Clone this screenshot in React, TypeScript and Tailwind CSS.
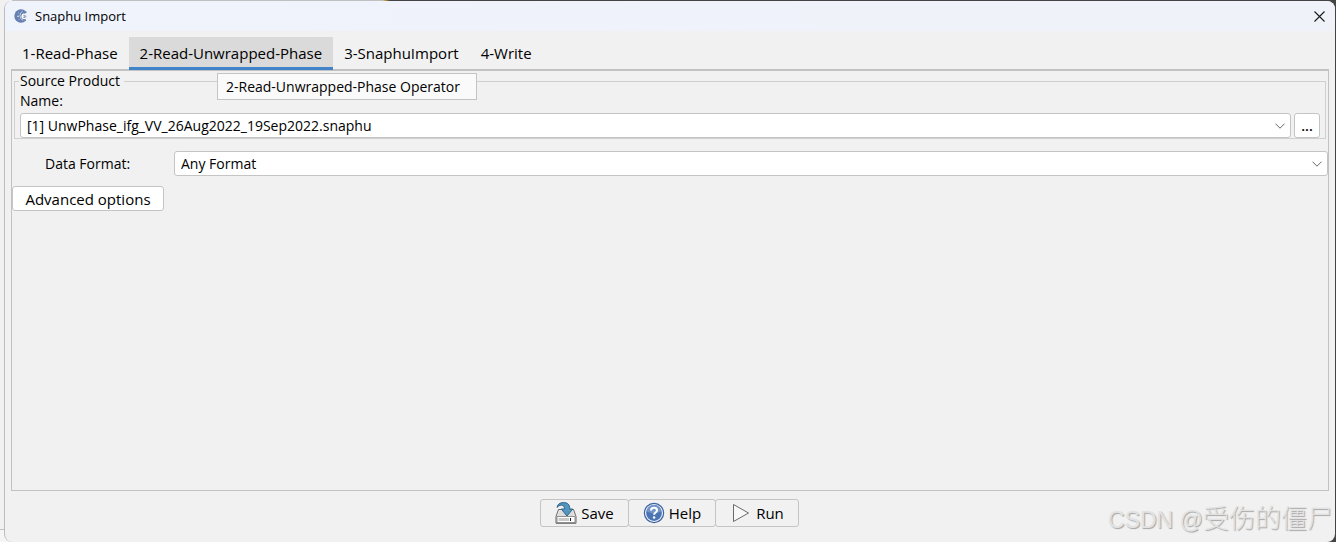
import type { ReactNode } from "react";

const tabs = ["1-Read-Phase", "2-Read-Unwrapped-Phase", "3-SnaphuImport", "4-Write"];
const activeTab = "2-Read-Unwrapped-Phase";

function AppLogo() {
  return (
    <svg width="14" height="14" viewBox="0 0 14 14" aria-hidden="true">
      <circle cx="7" cy="7" r="6.7" fill="#6580b0" />
      <path d="M11.2 4.5L14 3v9l-2.5-1.5z" fill="#eff2fb" />
      <path d="M8.6 2.2a4.8 4.8 0 0 0-2.6 4.6 4.7 4.7 0 0 0 3.2 4.5" fill="none" stroke="#cfd9ec" strokeWidth="0.9" />
      <path
        d="M8.2 7.1h4.2a2.2 2.2 0 1 0-.8 1.9"
        fill="none"
        stroke="#fff"
        strokeWidth="1.3"
      />
      <path d="M10 7.1h2.5" stroke="#6580b0" strokeWidth="0.9" />
      <circle cx="4" cy="7.4" r="0.8" fill="#dce4f2" />
      <circle cx="4.6" cy="4" r="0.5" fill="#b9c7e0" />
      <circle cx="5" cy="10.6" r="0.5" fill="#b9c7e0" />
    </svg>
  );
}

function SaveIcon() {
  return (
    <svg width="22" height="22" viewBox="0 0 22 22" aria-hidden="true">
      <path d="M3.5 7.5h15l2.5 7v6.8H1v-6.8z" fill="#f0f0ee" stroke="#666" />
      <path d="M4.5 8.5h13l2 5.5H2.5z" fill="#dcdcda" />
      <path d="M2 14.5h18v6H2z" fill="#fff" stroke="#777" strokeWidth="0.8" />
      <path d="M3.5 16h10.5v3H3.5z" fill="#c9c9c7" />
      <path d="M15.5 16v3" stroke="#222" strokeWidth="1.1" />
      <path
        d="M2 5.5C2.5 2 5 .6 8.5.6c4.3 0 6.3 2 6.3 6.4h3L12 14 6.2 7h3.2c0-2.5-.8-3.8-3-3.8-1.8 0-3 .8-4.4 2.3z"
        fill="#5596be"
        stroke="#245d86"
        strokeWidth="0.9"
        strokeLinejoin="round"
      />
    </svg>
  );
}

function HelpIcon() {
  return (
    <svg width="22" height="22" viewBox="0 0 22 22" aria-hidden="true">
      <circle cx="11" cy="11" r="9.6" fill="#f2f5fa" stroke="#3c62a0" strokeWidth="1.2" />
      <circle cx="11" cy="11" r="7.9" fill="#4a74b4" />
      <path d="M3.5 9a7.6 7.6 0 0 1 15 0c-4 3-10 3.5-15 0z" fill="#7395c8" />
      <path
        d="M8 8.6c0-2 1.3-2.9 3-2.9s3 1 3 2.6c0 2.2-2.9 2.2-2.9 4.5"
        fill="none"
        stroke="#fff"
        strokeWidth="2"
      />
      <circle cx="11.1" cy="15.6" r="1.25" fill="#fff" />
    </svg>
  );
}

function RunIcon() {
  return (
    <svg width="22" height="22" viewBox="0 0 22 22" aria-hidden="true">
      <path d="M3.5 2.5v17L18.5 11z" fill="#f8f8f8" stroke="#6a6a6a" strokeLinejoin="round" />
    </svg>
  );
}

function Combo({ id, value }: { id: string; value: string }) {
  return (
    <div className="grid min-w-0 flex-1 items-center">
      <select
        id={id}
        className="col-start-1 row-start-1 h-[25px] w-full appearance-none rounded-[3px] border border-[#c4c4c4] bg-white pr-6 pl-1.5"
      >
        <option>{value}</option>
      </select>
      <svg
        className="pointer-events-none col-start-1 row-start-1 mr-1.5 justify-self-end"
        width="10"
        height="6"
        viewBox="0 0 10 6"
        aria-hidden="true"
      >
        <path d="M.5.7L5 5.2 9.5.7" fill="none" stroke="#666" />
      </svg>
    </div>
  );
}

function ActionButton({ icon, children }: { icon: ReactNode; children: ReactNode }) {
  return (
    <button className="-ml-px flex h-7 items-center gap-1 rounded-[3px] border border-[#c4c4c4] px-3.5 text-[15px]">
      {icon}
      {children}
    </button>
  );
}

export default function App() {
  return (
    <div className="flex min-h-screen bg-[linear-gradient(to_right,#c0c0c0_383px,#d8a848_384px,#444_390px)] pt-px pr-px font-['Open_Sans','Noto_Sans',sans-serif] text-[14px] leading-5 text-black">
      <div className="-mt-px -mr-2 flex w-3 flex-col bg-[#f1f1f1]">
        <div className="flex-1 border-b border-[#c4c4c4]" />
        <div className="h-3 bg-[#f5f5f5]" />
      </div>

      <main className="relative flex min-w-0 flex-1 flex-col overflow-hidden rounded-lg border-l border-[#bcbcbc] bg-[#f1f1f1]">
        <header className="flex h-[30px] items-center gap-[7px] bg-linear-to-r from-[#eff3fc] to-[#f0f2f9] pr-2.5 pl-[9px]">
          <AppLogo />
          <h1 className="flex-1 text-[13px]">Snaphu Import</h1>
          <button aria-label="Close">
            <svg width="11" height="11" viewBox="0 0 11 11">
              <path d="M.5.5l10 10M10.5.5l-10 10" stroke="#1a1a1a" strokeWidth="1.1" />
            </svg>
          </button>
        </header>

        <div className="flex flex-1 flex-col px-1.5 pt-1.5">
          <div role="tablist" className="flex text-[15px]">
            {tabs.map((tab) => (
              <button
                key={tab}
                role="tab"
                aria-selected={tab === activeTab}
                className={
                  tab === activeTab
                    ? "relative z-10 -mb-px h-[33px] border-b-3 border-[#4083c9] bg-[#dadada] px-[11px] pt-0.5"
                    : "h-8 px-[11px]"
                }
              >
                {tab}
              </button>
            ))}
          </div>

          <section className="relative flex-1 border border-t-2 border-[#c2c2c2]">
            <fieldset className="mx-0.5 min-w-0 border border-[#d0d0d0] px-[5px]">
              <legend className="-ml-px pr-1 pl-px">Source Product</legend>
              <label htmlFor="source" className="block h-[22px]">
                Name:
              </label>
              <div className="flex gap-[3px]">
                <Combo id="source" value="[1] UnwPhase_ifg_VV_26Aug2022_19Sep2022.snaphu" />
                <button className="h-[25px] w-[26px] rounded-[3px] border border-[#c4c4c4] bg-white font-semibold">
                  ...
                </button>
              </div>
            </fieldset>

            <div className="mt-3 flex items-center">
              <label htmlFor="format" className="w-[162px] pl-[33px]">
                Data Format:
              </label>
              <Combo id="format" value="Any Format" />
            </div>

            <button className="mt-2.5 h-[25px] w-[152px] rounded-[3px] border border-[#c4c4c4] bg-white text-[15px]">
              Advanced options
            </button>

            <div
              role="tooltip"
              className="absolute top-0.5 left-[205px] w-[260px] border border-[#c4c4c4] bg-[#fafafa] px-2 pt-[3px] pb-0.5"
            >
              2-Read-Unwrapped-Phase Operator
            </div>
          </section>
        </div>

        <footer className="flex justify-center pt-2 pb-[15px]">
          <ActionButton icon={<SaveIcon />}>Save</ActionButton>
          <ActionButton icon={<HelpIcon />}>Help</ActionButton>
          <ActionButton icon={<RunIcon />}>Run</ActionButton>
        </footer>

        <p className="absolute right-0.5 bottom-1 font-['Liberation_Sans','Noto_Sans_CJK_SC',sans-serif] text-[26px] leading-9 font-light whitespace-nowrap text-[#e2e2e2] [text-shadow:1px_1px_1px_#a4a4a4]">
          <span className="text-[23px]">CSDN @</span>受伤的僵尸
        </p>
      </main>
    </div>
  );
}
